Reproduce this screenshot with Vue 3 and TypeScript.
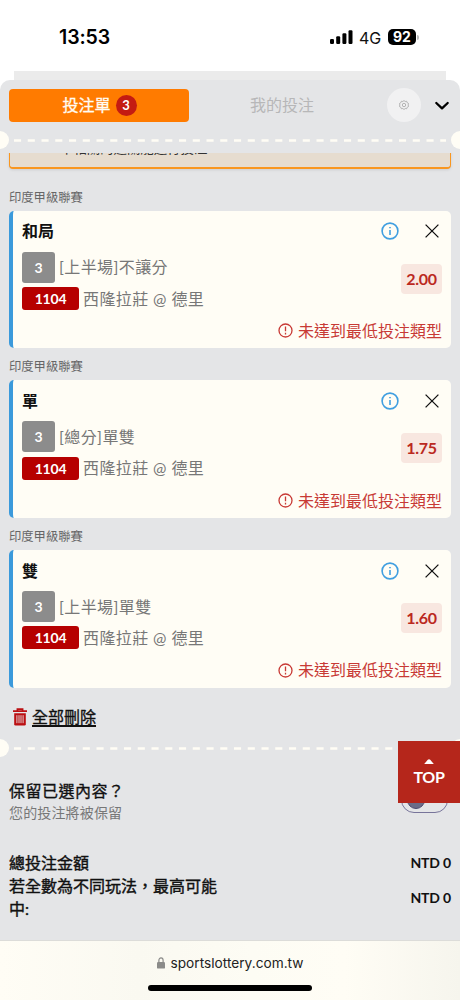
<script setup lang="ts">
interface Pick {
  league: string
  title: string
  market: string
  odds: string
}

const picks: Pick[] = [
  { league: '印度甲級聯賽', title: '和局', market: '[上半場]不讓分', odds: '2.00' },
  { league: '印度甲級聯賽', title: '單', market: '[總分]單雙', odds: '1.75' },
  { league: '印度甲級聯賽', title: '雙', market: '[上半場]單雙', odds: '1.60' },
]
</script>

<template>
  <div class="phone">
    <header class="status">
      <span class="clock">13:53</span>
      <div class="signals">
        <svg class="bars" width="23" height="15" viewBox="0 0 23 15">
          <rect x="0" y="9" width="4" height="5" rx="1.2" />
          <rect x="6.2" y="6.3" width="4" height="7.7" rx="1.2" />
          <rect x="12.4" y="3.3" width="4" height="10.7" rx="1.2" />
          <rect x="18.5" y="0.3" width="4" height="13.7" rx="1.2" />
        </svg>
        <span class="net">4G</span>
        <span class="battery">92</span>
        <span class="nub"></span>
      </div>
    </header>
    <div class="backdrop"></div>

    <main class="sheet">
      <div class="head">
        <div class="tabs">
          <div class="tab active">投注單<span class="count">3</span></div>
          <div class="tab idle">我的投注</div>
          <div class="gear">
            <svg width="10" height="10" viewBox="0 0 20 20">
              <path d="M10 1l2.3 2 3-.5 1 2.9 2.7 1.5-.6 3 .6 3.2-2.7 1.5-1 2.9-3-.5L10 19l-2.3-2-3 .5-1-2.9L1 13.1l.6-3.2-.6-3 2.7-1.5 1-2.9 3 .5z" />
              <circle cx="10" cy="10" r="3.4" />
            </svg>
          </div>
          <svg class="chevron" width="16" height="10" viewBox="0 0 16 10">
            <path d="M2.3 2L8 7.4 13.7 2" />
          </svg>
        </div>
        <div class="perforation">
          <span class="notch left"></span>
          <svg class="dashes" width="432" height="3"><line x1="0" y1="1.5" x2="432" y2="1.5" /></svg>
          <span class="notch right"></span>
        </div>
      </div>

      <div class="notice-window">
        <div class="notice">不相關的過關能進行投注</div>
      </div>

      <section v-for="(p, i) in picks" :key="i" class="pick">
        <div class="league">{{ p.league }}</div>
        <article class="card">
          <div class="title-row">
            <h3>{{ p.title }}</h3>
            <svg class="info" width="18" height="18" viewBox="0 0 18 18">
              <circle cx="9" cy="9" r="7.9" />
              <path d="M9 8v5M9 5v1.3" />
            </svg>
            <svg class="close" width="14" height="14" viewBox="0 0 14 14">
              <path d="M.6.6l12.8 12.8M13.4.6L.6 13.4" />
            </svg>
          </div>
          <div class="detail">
            <div class="lines">
              <div class="line market"><span class="min">3</span><span class="label">{{ p.market }}</span></div>
              <div class="line match"><span class="code">1104</span><span class="label">西隆拉莊 @ 德里</span></div>
            </div>
            <div class="odds">{{ p.odds }}</div>
          </div>
          <div class="warning">
            <svg width="15" height="15" viewBox="0 0 15 15">
              <circle cx="7.5" cy="7.5" r="6.5" />
              <path d="M7.5 3.4v4.8M7.5 9.8v1.7" />
            </svg>
            <span>未達到最低投注類型</span>
          </div>
        </article>
      </section>

      <div class="clear">
        <svg width="14" height="18" viewBox="0 0 14 18">
          <path class="lid" d="M4.4 2.3V1.1h5.2v1.2M0 3.1h14" />
          <path class="bin" d="M1.2 5.2h11.6v11a1.4 1.4 0 0 1-1.4 1.4H2.6a1.4 1.4 0 0 1-1.4-1.4z" />
          <path class="slot" d="M3.9 7.2v8M6 7.2v8M8 7.2v8M10.1 7.2v8" />
        </svg>
        <span>全部刪除</span>
      </div>

      <div class="perforation lower">
        <span class="notch left"></span>
        <svg class="dashes" width="432" height="3"><line x1="0" y1="1.5" x2="432" y2="1.5" /></svg>
        <span class="notch right"></span>
      </div>

      <div class="keep">
        <div>
          <div class="keep-title">保留已選內容？</div>
          <div class="keep-note">您的投注將被保留</div>
        </div>
        <div class="toggle"><span></span></div>
      </div>

      <dl class="totals">
        <div><dt>總投注金額</dt><dd>NTD 0</dd></div>
        <div><dt>若全數為不同玩法，最高可能中:</dt><dd>NTD 0</dd></div>
      </dl>
    </main>

    <button class="top">
      <svg width="10" height="5" viewBox="0 0 10 5"><path d="M.2 5L3.8.8q1.2-1.2 2.4 0L9.8 5z" /></svg>
      <span>TOP</span>
    </button>

    <footer class="browser">
      <div class="address">
        <svg width="8" height="12" viewBox="0 0 8 12">
          <path class="shackle" d="M1.9 6V3.2a2.1 2.3 0 0 1 4.2 0V6" />
          <rect x="0" y="5" width="8" height="6.6" rx="1.2" />
        </svg>
        <span>sportslottery.com.tw</span>
      </div>
      <div class="home"></div>
    </footer>
  </div>
</template>

<style>
body { margin: 0; background: #fff; }
</style>

<style scoped>
* { box-sizing: border-box; }
.phone { position: relative; width: 460px; height: 1000px; overflow: hidden; background: #fff; font-family: Lato, "Noto Sans CJK TC", sans-serif; color: #111; }
.status { height: 71px; display: flex; justify-content: space-between; align-items: flex-start; padding: 25px 41px 0 59px; font-family: Inter, sans-serif; }
.clock { font-size: 19.5px; line-height: 25px; font-weight: 600; letter-spacing: -.1px; color: #000; }
.signals { display: flex; align-items: center; height: 24px; }
.bars { fill: #000; margin-top: 1px; }
.net { width: 22px; margin-left: 6px; font-size: 16px; line-height: 24px; letter-spacing: -.2px; color: #111; margin-top: 1px; }
.battery { width: 28px; height: 16px; margin-left: 7px; border-radius: 5px; background: #000; color: #fff; font-size: 14px; line-height: 16px; font-weight: 700; text-align: center; }
.nub { width: 2px; height: 5px; margin-left: 1px; border-radius: 0 2px 2px 0; background: #bbb; }
.backdrop { height: 9px; margin: 0 14px; background: #ebebeb; }
.sheet { height: 860px; background: #e4e5e7; border-radius: 10px 10px 0 0; overflow: hidden; }
.head { height: 73px; }
.tabs { display: flex; align-items: center; height: 50px; padding: 0 10px 0 9px; }
.tab { font-size: 16px; line-height: 32px; }
.active { display: flex; align-items: center; justify-content: center; width: 180px; height: 33px; border-radius: 4px; background: #ff7b00; color: #fffdf5; -webkit-text-stroke: .3px #fffdf5; padding-left: 1px; }
.count { width: 21px; height: 21px; margin-left: 5px; border-radius: 50%; background: #c41b12; color: #fff; font-size: 13px; line-height: 21px; text-align: center; font-weight: 700; -webkit-text-stroke: 0; }
.idle { flex: 1; text-align: center; color: #b7b7b8; padding-right: 12px; }
.gear { width: 34px; height: 34px; border-radius: 50%; background: #f1f1f2; display: flex; align-items: center; justify-content: center; }
.gear svg { fill: none; stroke: #a9a9a9; stroke-width: 1.7; stroke-linejoin: round; }
.chevron { margin-left: 13px; margin-top: 2px; fill: none; stroke: #000; stroke-width: 2.3; stroke-linecap: round; stroke-linejoin: round; }
.perforation { display: flex; align-items: center; justify-content: space-between; height: 19px; margin: 0 -9px; }
.dashes { margin-top: 2px; width: 432px; flex: none; overflow: hidden; }
.dashes line { stroke: #fffdf5; stroke-width: 2.6; stroke-dasharray: 7.1 6.65; }
.notch { width: 18px; height: 18px; border-radius: 50%; background: #fffdf5; flex: none; }
.notice-window { height: 20px; overflow: hidden; display: flex; align-items: flex-start; padding: 0 9px; }
.notice { flex: 1; height: 46px; margin-top: -30px; padding: 14px 0 0 50px; border: 1.5px solid #f9961f; border-bottom-width: 2px; border-radius: 4px; background: #e6dccf; box-shadow: 0 1px 3px rgba(0, 0, 0, .1); font-size: 13.4px; line-height: 20px; color: #333; }
.pick { height: 169.8px; padding: 0 9px; }
.league { height: 37.5px; padding-top: 14.5px; font-size: 12.3px; line-height: 20px; color: #666; }
.card { height: 137.7px; padding: 8.5px 9px 0 9px; border-left: 4px solid #3b9adb; border-radius: 5px; background: #fffdf5; }
.title-row { display: flex; align-items: center; height: 24px; }
h3 { flex: 1; margin: 0; font-size: 16px; line-height: 24px; font-weight: 700; color: #111; }
.info { fill: none; stroke: #409fe0; stroke-width: 1.6; }
.close { margin: 0 3px 0 26px; stroke: #111; stroke-width: 1.3; fill: none; }
.detail { display: flex; justify-content: space-between; align-items: flex-start; margin-top: 8.5px; }
.line { display: flex; align-items: center; font-size: 16px; letter-spacing: .4px; color: #777; white-space: pre; }
.label { margin-top: -1.5px; }
.market { height: 31px; }
.match { height: 23px; margin-top: 4.3px; }
.min, .code { color: #fff; font-size: 14px; font-weight: 700; text-align: center; border-radius: 3px; letter-spacing: -.2px; }
.min { width: 33px; height: 31px; line-height: 32px; margin-right: 4px; background: #8c8c8c; }
.code { width: 57px; height: 23px; line-height: 24px; margin-right: 4px; background: #b60000; }
.odds { width: 41px; height: 30px; margin-top: 12px; border-radius: 4px; background: #f8e7e0; color: #bb291f; font-size: 16px; line-height: 30px; font-weight: 700; letter-spacing: -.25px; text-align: center; }
.warning { display: flex; justify-content: flex-end; align-items: center; height: 24px; margin-top: 9px; font-size: 16px; line-height: 24px; color: #c83a35; }
.warning svg { margin-right: 5px; fill: none; stroke: currentColor; stroke-width: 1.3; }
.clear { display: flex; align-items: center; height: 24px; margin-top: 23px; padding-left: 13px; font-size: 16px; line-height: 24px; }
.clear svg { margin-right: 5px; fill: none; }
.clear span { text-decoration: underline; text-underline-offset: 2px; text-decoration-thickness: 1.5px; -webkit-text-stroke: .35px #111; }
.lid { stroke: #bb0f12; stroke-width: 1.7; }
.bin { fill: #bb0f12; }
.slot { stroke: #e4e5e7; stroke-width: .9; }
.lower { margin-top: 9px; }
.keep { display: flex; justify-content: space-between; height: 44px; margin-top: 22px; padding: 0 12px 0 9px; }
.keep-title { font-size: 16px; line-height: 24px; letter-spacing: .5px; -webkit-text-stroke: .35px #111; }
.keep-note { font-size: 14px; line-height: 20px; letter-spacing: .15px; color: #777; }
.toggle { width: 47px; height: 26px; margin-top: 8px; padding: 3px 4px; border: 1.3px solid #77749a; border-radius: 13px; }
.toggle span { display: block; width: 18px; height: 18px; margin-left: 1px; border-radius: 50%; background: #6b6c88; border: 1px solid #4c496e; }
.totals { margin: 28px 9px 0; }
.totals div { display: flex; justify-content: space-between; align-items: center; }
dt { width: 216px; font-size: 16px; line-height: 23px; -webkit-text-stroke: .4px #111; }
dd { margin: 0; font-size: 14px; line-height: 23px; font-weight: 700; letter-spacing: -.15px; }
.top { position: absolute; left: 398px; top: 741px; width: 62px; height: 62px; padding: 18px 0 0; border: 0; background: #b5261b; color: #fff; display: flex; flex-direction: column; align-items: center; font: 700 16px/24px Lato, sans-serif; letter-spacing: -.3px; }
.top svg { fill: #fff; flex: none; }
.top span { margin-top: 1px; }
.browser { height: 60px; border-top: 1px solid #dcdcd9; background: linear-gradient(90deg, #fffdf5, #faf9f1 30%, #fdfcf4 55%, #fffdf5 75%, #f6f5ed); display: flex; flex-direction: column; align-items: center; }
.address { display: flex; align-items: center; height: 24px; margin-top: 10px; font: 400 13.7px/24px Inter, sans-serif; color: #222; }
.address svg { margin: -1px 6px 0 0; fill: #8b8b89; }
.shackle { fill: none; stroke: #8b8b89; stroke-width: 1.2; }
.home { width: 164px; height: 6px; margin-top: 10px; border-radius: 3px; background: #000; }
</style>
